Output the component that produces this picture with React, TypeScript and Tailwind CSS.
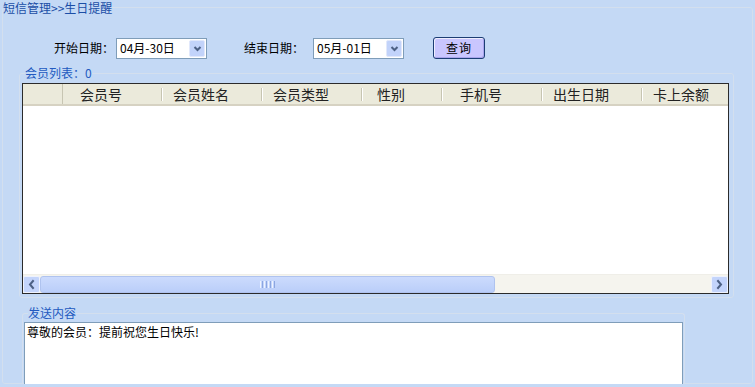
import React from 'react';

const columns = [
  { label: '会员号', width: 100 },
  { label: '会员姓名', width: 100 },
  { label: '会员类型', width: 100 },
  { label: '性别', width: 80 },
  { label: '手机号', width: 100 },
  { label: '出生日期', width: 100 },
  { label: '卡上余额', width: 100 },
];

function Chevron({ dir }: { dir: 'left' | 'right' }) {
  const d = dir === 'left' ? 'M6 2 L3 5.5 L6 9' : 'M3 2 L6 5.5 L3 9';
  return (
    <svg width="9" height="11" viewBox="0 0 9 11">
      <path d={d} fill="none" stroke="#4D6185" strokeWidth="2" strokeLinecap="square" />
    </svg>
  );
}

function DateCombo({ value }: { value: string }) {
  return (
    <div className="w-[91px] h-[21px] border border-[#7F9DB9] bg-white flex items-center justify-between pl-[3px] pr-[1px]">
      <span className="text-[12px] leading-[14px] text-black">{value}</span>
      <div className="w-[16px] h-[17px] rounded-[2px] border border-[#E1E8FB] bg-[#C2D3FA] flex items-center justify-center">
        <svg width="11" height="11" viewBox="0 0 11 11">
          <path d="M2.5 4 L5.5 7 L8.5 4" fill="none" stroke="#4D6185" strokeWidth="2" />
        </svg>
      </div>
    </div>
  );
}

function ArrowButton({ dir }: { dir: 'left' | 'right' }) {
  return (
    <div className="w-[17px] h-[17px] shrink-0 rounded-[2px] border border-[#EEF2FD] bg-[#C3D4FB] flex items-center justify-center">
      <Chevron dir={dir} />
    </div>
  );
}

export default function App() {
  return (
    <div className="w-[755px] h-[387px] pt-[1px] bg-[#C4D9F5] overflow-hidden font-['Noto_Sans_CJK_SC','Liberation_Sans',sans-serif]">
      <fieldset className="ml-[2px] w-[751px] h-[383px] border border-[#D3DFEE] rounded-[3px]">
        <legend className="text-[12px] leading-[13px] text-[#1B4EA6]">短信管理&gt;&gt;生日提醒</legend>

        {/* Query bar */}
        <div className="mt-[23px] h-[22px] flex items-center pl-[51px] text-[12px] leading-[14px] text-black">
          <span className="w-[62px]">开始日期：</span>
          <DateCombo value="04月-30日" />
          <span className="ml-[37px] w-[69px]">结束日期：</span>
          <DateCombo value="05月-01日" />
          <button className="ml-[29px] w-[52px] h-[22px] rounded-[3px] border border-[#1C3E74] bg-[#C9C6FE] shadow-[inset_1px_1px_0_#EEEDFF,inset_-1px_-1px_0_#A9A4EC] text-[12px] leading-[14px] tracking-[1px] text-black">
            查询
          </button>
        </div>

        {/* Member list */}
        <fieldset className="mt-[7px] ml-[16px] w-[715px] border border-[#D3DFEE] rounded-[3px] pb-[3px]">
          <legend className="ml-[5px] text-[12px] leading-[14px] text-[#2259C0]">会员列表：0</legend>
          <div className="mt-[3px] ml-[2px] w-[707px] h-[211px] border border-[#2B2B2B] bg-white flex flex-col overflow-hidden">
            <div className="h-[22px] shrink-0 flex bg-[#EBEADB] border-b-2 border-[#D6D2C2]">
              <div className="w-[40px] shrink-0 border-r border-[#C7C5B2]" />
              {columns.map((c) => (
                <div key={c.label} className="shrink-0 flex items-center" style={{ width: c.width }}>
                  <span className="flex-1 text-center pr-[22px] text-[14px] leading-[16px] text-[#222]">{c.label}</span>
                  <div className="w-px h-[13px] bg-[#C7C5B2]" />
                  <div className="w-px h-[13px] bg-white" />
                </div>
              ))}
            </div>
            <div className="flex-1 bg-white border-b border-[#EFEEE8]" />
            <div className="h-[18px] shrink-0 flex items-center bg-[#F5F4EE]">
              <ArrowButton dir="left" />
              <div className="w-[455px] h-[17px] shrink-0 rounded-[3px] border border-[#AFC3EF] bg-[linear-gradient(#CCDBFD,#BACEF9)] flex items-center justify-center gap-[1px]">
                <div className="w-px h-[7px] bg-[#EEF3FE]" />
                <div className="w-px h-[7px] bg-[#8CA6E0]" />
                <div className="w-px h-[7px] bg-[#EEF3FE]" />
                <div className="w-px h-[7px] bg-[#8CA6E0]" />
                <div className="w-px h-[7px] bg-[#EEF3FE]" />
                <div className="w-px h-[7px] bg-[#8CA6E0]" />
                <div className="w-px h-[7px] bg-[#EEF3FE]" />
                <div className="w-px h-[7px] bg-[#8CA6E0]" />
              </div>
              <div className="flex-1" />
              <ArrowButton dir="right" />
            </div>
          </div>
        </fieldset>

        {/* Send content */}
        <fieldset className="mt-[8px] ml-[19px] w-[663px] border border-b-0 border-[#D3DFEE] rounded-t-[3px]">
          <legend className="ml-[5px] text-[12px] leading-[14px] text-[#2259C0]">发送内容</legend>
          <div className="mt-[2px] ml-[1px] w-[659px] h-[62px] border border-b-0 border-[#7F9DB9] bg-white px-[2px] pt-[2px] text-[12px] leading-[14px] text-black">
            尊敬的会员：提前祝您生日快乐!
          </div>
        </fieldset>
      </fieldset>
    </div>
  );
}
